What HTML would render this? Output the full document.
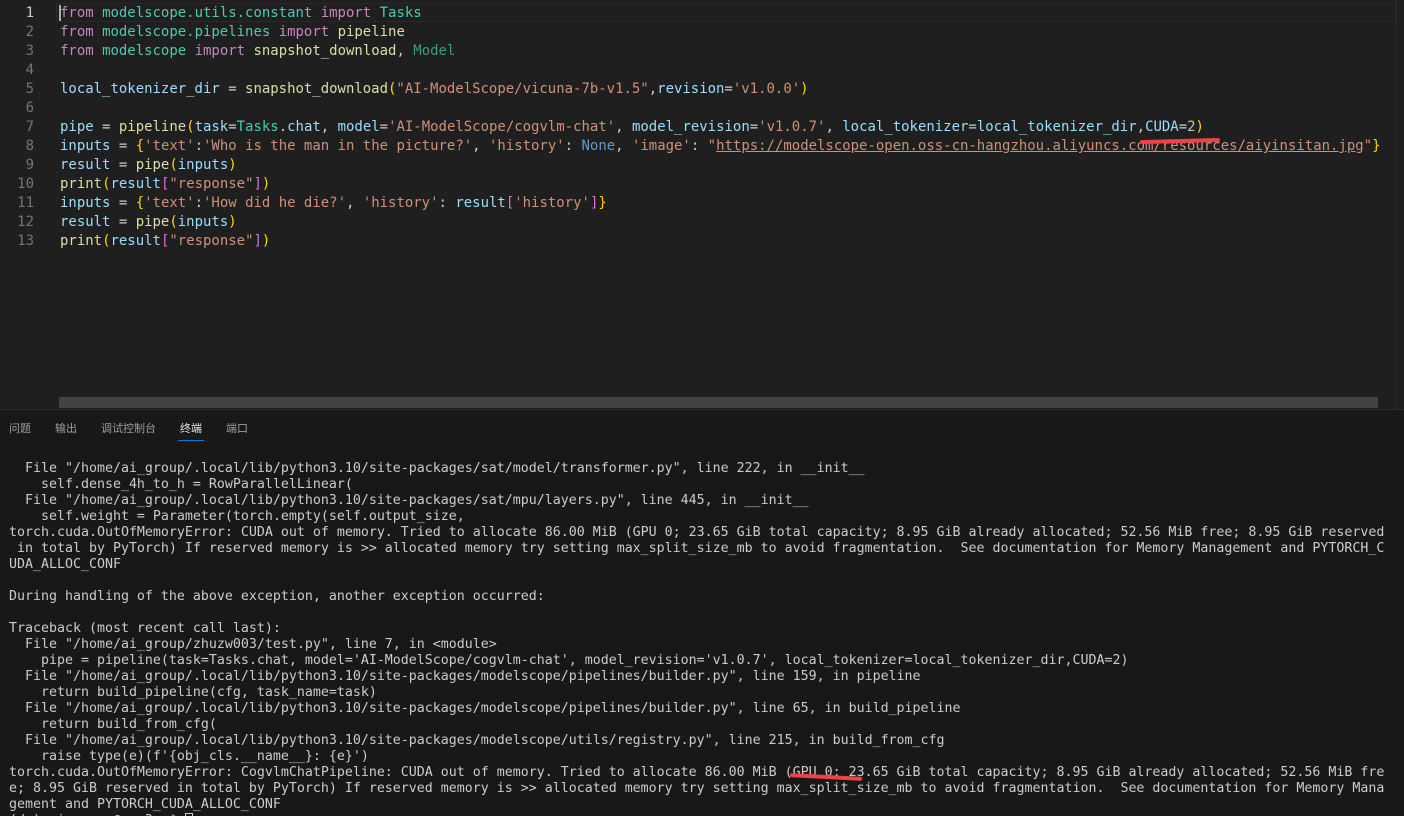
<!DOCTYPE html>
<html><head><meta charset="utf-8"><style>
*{margin:0;padding:0;box-sizing:border-box}
html{width:1404px;height:816px;overflow:hidden}
body{width:1404px;height:816px;overflow:hidden;background:#1f1f1f;font-family:"DejaVu Sans Mono","Liberation Mono",monospace;position:relative}
#ed{position:absolute;left:0;top:0;width:1404px;height:409px;background:#1f1f1f}
.ln{position:absolute;left:0;width:34px;text-align:right;color:#6e7681;font-size:14px;line-height:19px}
.cl{position:absolute;left:60px;white-space:pre;color:#cccccc;font-size:13.98px;line-height:19px}
.k{color:#c586c0}.m{color:#4ec9b0}.f{color:#dcdcaa}.v{color:#9cdcfe}.s{color:#ce9178}.n{color:#569cd6}.b{color:#ffd700}.p{color:#da70d6}.nu{color:#b5cea8}
#term{position:absolute;left:0;top:409px;width:1404px;height:407px;background:#181818;border-top:1px solid #2b2b2b;overflow:hidden}
.tab{position:absolute;top:10px;font-family:"Liberation Sans","Noto Sans CJK SC",sans-serif;font-size:11px;color:#9d9d9d}
.tl{position:absolute;left:9px;white-space:pre;color:#cccccc;font-size:13.29px;line-height:16px}
</style></head><body>
<div id="ed">
<div style="position:absolute;left:56px;top:3px;width:1340px;height:19px;border:1px solid #282828"></div>
<div class="ln" style="top:4px;color:#cccccc">1</div>
<div class="ln" style="top:23px">2</div>
<div class="ln" style="top:42px">3</div>
<div class="ln" style="top:61px">4</div>
<div class="ln" style="top:80px">5</div>
<div class="ln" style="top:99px">6</div>
<div class="ln" style="top:118px">7</div>
<div class="ln" style="top:137px">8</div>
<div class="ln" style="top:156px">9</div>
<div class="ln" style="top:175px">10</div>
<div class="ln" style="top:194px">11</div>
<div class="ln" style="top:213px">12</div>
<div class="ln" style="top:232px">13</div>
<div style="position:absolute;left:59px;top:5px;width:2px;height:16px;background:#aeafad"></div>
<div class="cl" style="top:4px"><span class="k">from</span> <span class="m">modelscope.utils.constant</span> <span class="k">import</span> <span class="m">Tasks</span></div>
<div class="cl" style="top:23px"><span class="k">from</span> <span class="m">modelscope.pipelines</span> <span class="k">import</span> <span class="f">pipeline</span></div>
<div class="cl" style="top:42px"><span class="k">from</span> <span class="m">modelscope</span> <span class="k">import</span> <span class="f">snapshot_download</span>, <span class="m" style="color:#3d9a87">Model</span></div>
<div class="cl" style="top:80px"><span class="v">local_tokenizer_dir</span> = <span class="f">snapshot_download</span><span class="b">(</span><span class="s">"AI-ModelScope/vicuna-7b-v1.5"</span>,<span class="v">revision</span>=<span class="s">'v1.0.0'</span><span class="b">)</span></div>
<div class="cl" style="top:118px"><span class="v">pipe</span> = <span class="f">pipeline</span><span class="b">(</span><span class="v">task</span>=<span class="m">Tasks</span>.<span class="v">chat</span>, <span class="v">model</span>=<span class="s">'AI-ModelScope/cogvlm-chat'</span>, <span class="v">model_revision</span>=<span class="s">'v1.0.7'</span>, <span class="v">local_tokenizer</span>=<span class="v">local_tokenizer_dir</span>,<span class="v">CUDA</span>=<span class="nu">2</span><span class="b">)</span></div>
<div class="cl" style="top:137px"><span class="v">inputs</span> = <span class="b">{</span><span class="s">'text'</span>:<span class="s">'Who is the man in the picture?'</span>, <span class="s">'history'</span>: <span class="n">None</span>, <span class="s">'image'</span>: <span class="s">"<u>https://modelscope-open.oss-cn-hangzhou.aliyuncs.com/resources/aiyinsitan.jpg</u>"</span><span class="b">}</span></div>
<div class="cl" style="top:156px"><span class="v">result</span> = <span class="f">pipe</span><span class="b">(</span><span class="v">inputs</span><span class="b">)</span></div>
<div class="cl" style="top:175px"><span class="f">print</span><span class="b">(</span><span class="v">result</span><span class="p">[</span><span class="s">"response"</span><span class="p">]</span><span class="b">)</span></div>
<div class="cl" style="top:194px"><span class="v">inputs</span> = <span class="b">{</span><span class="s">'text'</span>:<span class="s">'How did he die?'</span>, <span class="s">'history'</span>: <span class="v">result</span><span class="p">[</span><span class="s">'history'</span><span class="p">]</span><span class="b">}</span></div>
<div class="cl" style="top:213px"><span class="v">result</span> = <span class="f">pipe</span><span class="b">(</span><span class="v">inputs</span><span class="b">)</span></div>
<div class="cl" style="top:232px"><span class="f">print</span><span class="b">(</span><span class="v">result</span><span class="p">[</span><span class="s">"response"</span><span class="p">]</span><span class="b">)</span></div>
<div style="position:absolute;left:1140px;top:139px;width:80px;height:4px;border-radius:2px;background:#f0404a;transform:rotate(-1.5deg)"></div>
<div style="position:absolute;left:59px;top:397px;width:1319px;height:11px;background:#424242"></div>
<div style="position:absolute;left:1396px;top:0;width:8px;height:409px;border-left:1px solid #2b2b2b"></div>
</div>
<div id="term">
<div class="tab" style="left:9px">问题</div>
<div class="tab" style="left:55px">输出</div>
<div class="tab" style="left:101px">调试控制台</div>
<div class="tab" style="left:180px;color:#e7e7e7">终端</div>
<div class="tab" style="left:226px">端口</div>
<div style="position:absolute;left:178px;top:30px;width:26px;height:1px;background:#0078d4"></div>
<div class="tl" style="top:51px">  File "/home/ai_group/.local/lib/python3.10/site-packages/sat/model/transformer.py", line 222, in __init__
    self.dense_4h_to_h = RowParallelLinear(
  File "/home/ai_group/.local/lib/python3.10/site-packages/sat/mpu/layers.py", line 445, in __init__
    self.weight = Parameter(torch.empty(self.output_size,
torch.cuda.OutOfMemoryError: CUDA out of memory. Tried to allocate 86.00 MiB (GPU 0; 23.65 GiB total capacity; 8.95 GiB already allocated; 52.56 MiB free; 8.95 GiB reserved
 in total by PyTorch) If reserved memory is >> allocated memory try setting max_split_size_mb to avoid fragmentation.  See documentation for Memory Management and PYTORCH_C
UDA_ALLOC_CONF

During handling of the above exception, another exception occurred:

Traceback (most recent call last):
  File "/home/ai_group/zhuzw003/test.py", line 7, in &lt;module&gt;
    pipe = pipeline(task=Tasks.chat, model='AI-ModelScope/cogvlm-chat', model_revision='v1.0.7', local_tokenizer=local_tokenizer_dir,CUDA=2)
  File "/home/ai_group/.local/lib/python3.10/site-packages/modelscope/pipelines/builder.py", line 159, in pipeline
    return build_pipeline(cfg, task_name=task)
  File "/home/ai_group/.local/lib/python3.10/site-packages/modelscope/pipelines/builder.py", line 65, in build_pipeline
    return build_from_cfg(
  File "/home/ai_group/.local/lib/python3.10/site-packages/modelscope/utils/registry.py", line 215, in build_from_cfg
    raise type(e)(f'{obj_cls.__name__}: {e}')
torch.cuda.OutOfMemoryError: CogvlmChatPipeline: CUDA out of memory. Tried to allocate 86.00 MiB (GPU 0; 23.65 GiB total capacity; 8.95 GiB already allocated; 52.56 MiB fre
e; 8.95 GiB reserved in total by PyTorch) If reserved memory is &gt;&gt; allocated memory try setting max_split_size_mb to avoid fragmentation.  See documentation for Memory Mana
gement and PYTORCH_CUDA_ALLOC_CONF
(ds) ai_group@gpu3:~$ <span style="display:inline-block;width:8px;height:14px;border:1px solid #ccc;vertical-align:middle"></span></div>
<div style="position:absolute;left:790px;top:365px;width:72px;height:4px;border-radius:2px;background:#f0404a;transform:rotate(3deg)"></div>
</div>
</body></html>
